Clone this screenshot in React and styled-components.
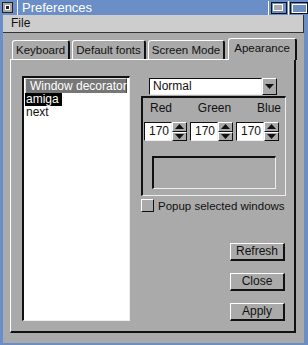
import React from 'react'
import styled, { createGlobalStyle } from 'styled-components'

const Global = createGlobalStyle`
  html, body { margin: 0; padding: 0; }
  body {
    font-family: "Liberation Sans", "DejaVu Sans", sans-serif;
    font-size: 11.5px;
    color: #111;
    white-space: nowrap;
  }
`

const Frame = styled.div`
  width: 308px;
  height: 345px;
  background: #6b8ec6;
  display: flex;
  flex-direction: column;
  box-sizing: border-box;
  padding: 0 4px 4px 3px;
  overflow: hidden;
`

const TitleBar = styled.div`
  height: 15px;
  display: flex;
  align-items: center;
  margin-left: -3px;
  margin-right: -4px;
  color: #fff;
  font-size: 13px;
`

const Gadget = styled.div`
  width: 11px;
  height: 11px;
  margin: 0 4px 0 2px;
  background: #aaa;
  border: 1px solid #222;
  box-sizing: border-box;
  display: flex;
  align-items: center;
  justify-content: center;
  &::after {
    content: '';
    width: 5px;
    height: 5px;
    background: #222;
    border: 1px solid #fff;
    box-sizing: border-box;
  }
`

const Title = styled.div`
  flex: 1;
  padding-left: 4px;
  border-left: 1px solid #fff;
  height: 15px;
  line-height: 15px;
`

const Depth = styled.div`
  width: 20px;
  height: 14px;
  box-sizing: border-box;
  border-left: 1px solid #fff;
  display: flex;
  align-items: center;
  justify-content: center;
  svg { display: block; }
`

const Body = styled.div`
  flex: 1;
  background: #aaa;
  display: flex;
  flex-direction: column;
`

const MenuBar = styled.div`
  height: 17px;
  background: #cdcdcd;
  border-bottom: 1px solid #333;
  border-right: 1px solid #333;
  padding-left: 8px;
  line-height: 17px;
  font-size: 12px;
`

const Content = styled.div`
  flex: 1;
  padding: 5px 8px 10px 7px;
  display: flex;
  flex-direction: column;
`

const Tabs = styled.div`
  display: flex;
  align-items: flex-end;
  height: 21px;
  padding-left: 2px;
`

const Tab = styled.div`
  height: ${p => (p.$active ? 21 : 18)}px;
  line-height: ${p => (p.$active ? 19 : 18)}px;
  padding: 0 ${p => (p.$active ? 5 : 3)}px;
  margin-right: ${p => (p.$active ? 0 : 2)}px;
  margin-left: ${p => (p.$active ? 1 : 0)}px;
  border-top: 1px solid #fff;
  border-left: 1px solid #fff;
  border-right: 2px solid #111;
  border-radius: 3px 3px 0 0;
  background: #aaa;
  position: relative;
  z-index: ${p => (p.$active ? 2 : 0)};
  margin-bottom: ${p => (p.$active ? -1 : 0)}px;
`

const Panel = styled.div`
  flex: 1;
  border-top: 1px solid #fff;
  border-left: 1px solid #fff;
  border-right: 2px solid #111;
  border-bottom: 2px solid #111;
  display: flex;
  padding: 16px 8px 10px 11px;
  gap: 11px;
`

const ListBox = styled.div`
  width: 108px;
  flex: none;
  background: #fff;
  border-top: 2px solid #111;
  border-left: 2px solid #111;
  border-right: 1px solid #eee;
  border-bottom: 1px solid #eee;
  display: flex;
  flex-direction: column;
  box-sizing: border-box;
  padding-left: 1px;
`

const ListHeader = styled.div`
  background: #777;
  color: #fff;
  height: 14px;
  line-height: 14px;
  padding-left: 4px;
  border-top: 1px solid #ddd;
  border-left: 1px solid #ddd;
  border-right: 1px solid #444;
  margin-right: 2px;
  font-size: 12px;
`

const ListItem = styled.div`
  height: 13px;
  line-height: 13px;
  padding-left: 1px;
  align-self: flex-start;
  padding-right: 3px;
  font-size: 12px;
  background: ${p => (p.$selected ? '#000' : 'transparent')};
  color: ${p => (p.$selected ? '#fff' : '#111')};
`

const Right = styled.div`
  width: 145px;
  flex: none;
  display: flex;
  flex-direction: column;
  padding-top: 2px;
`

const Select = styled.div`
  display: flex;
  height: 17px;
  margin-left: 8px;
  margin-right: 9px;
  margin-bottom: 1px;
`

const SelectField = styled.div`
  flex: 1;
  background: #fff;
  border-top: 1px solid #111;
  border-left: 1px solid #111;
  border-right: 1px solid #eee;
  border-bottom: 1px solid #eee;
  padding-left: 3px;
  line-height: 15px;
  font-size: 12px;
`

const ArrowButton = styled.div`
  width: 15px;
  box-sizing: border-box;
  border-top: 1px solid #fff;
  border-left: 1px solid #fff;
  border-right: 1px solid #111;
  border-bottom: 1px solid #111;
  display: flex;
  align-items: center;
  justify-content: center;
`

const Group = styled.div`
  border-top: 2px solid #111;
  border-left: 2px solid #111;
  border-right: 1px solid #eee;
  border-bottom: 1px solid #eee;
  height: 100px;
  box-sizing: border-box;
  display: flex;
  flex-direction: column;
  padding: 3px 0 0 1px;
`

const Labels = styled.div`
  display: flex;
  justify-content: space-between;
  padding: 0 4px 0 6px;
  height: 14px;
  line-height: 14px;
  font-size: 12px;
`

const Spinners = styled.div`
  display: flex;
  gap: 3px;
  margin-top: 7px;
`

const Spinner = styled.div`
  display: flex;
  height: 19px;
`

const NumField = styled.div`
  width: 28px;
  box-sizing: border-box;
  background: #fff;
  border-top: 1px solid #111;
  border-left: 1px solid #111;
  border-right: 1px solid #eee;
  border-bottom: 1px solid #eee;
  line-height: 17px;
  padding-left: 4px;
  font-size: 12px;
`

const SpinCol = styled.div`
  width: 15px;
  display: flex;
  flex-direction: column;
`

const SpinBtn = styled.div`
  flex: 1;
  box-sizing: border-box;
  border-top: 1px solid #fff;
  border-left: 1px solid #fff;
  border-right: 1px solid #111;
  border-bottom: 1px solid #111;
  display: flex;
  align-items: center;
  justify-content: center;
`

const Preview = styled.div`
  margin: 15px 0 0 8px;
  width: 124px;
  height: 33px;
  box-sizing: border-box;
  border-top: 2px solid #111;
  border-left: 2px solid #111;
  border-right: 1px solid #eee;
  border-bottom: 1px solid #eee;
  background: #aaa;
`

const CheckRow = styled.label`
  display: flex;
  align-items: center;
  gap: 4px;
  margin-top: 2px;
  height: 15px;
`

const Box = styled.span`
  width: 13px;
  height: 13px;
  flex: none;
  box-sizing: border-box;
  border-top: 1px solid #fff;
  border-left: 1px solid #fff;
  border-right: 1px solid #111;
  border-bottom: 1px solid #111;
`

const Buttons = styled.div`
  margin-top: 30px;
  display: flex;
  flex-direction: column;
  align-items: flex-end;
  gap: 12px;
`

const Button = styled.div`
  width: 55px;
  height: 18px;
  box-sizing: border-box;
  border-top: 1px solid #fff;
  border-left: 1px solid #fff;
  border-right: 2px solid #111;
  border-bottom: 2px solid #111;
  text-align: center;
  line-height: 15px;
  margin-right: 1px;
  font-size: 12px;
`

const Up = () => (
  <svg width="9" height="5" viewBox="0 0 9 5"><path d="M4.5 0L9 5H0z" fill="#111" /></svg>
)
const Down = () => (
  <svg width="9" height="5" viewBox="0 0 9 5"><path d="M0 0h9L4.5 5z" fill="#111" /></svg>
)

const Num = () => (
  <Spinner>
    <NumField>170</NumField>
    <SpinCol>
      <SpinBtn><Up /></SpinBtn>
      <SpinBtn><Down /></SpinBtn>
    </SpinCol>
  </Spinner>
)

export default function App () {
  return (
    <Frame>
      <Global />
      <TitleBar>
        <Gadget />
        <Title>Preferences</Title>
        <Depth>
          <svg width="16" height="12" viewBox="0 0 16 12">
            <rect x="0.5" y="0.5" width="15" height="11" fill="none" stroke="#111" />
            <rect x="2.5" y="2.5" width="9" height="6" fill="#aaa" stroke="#fff" />
          </svg>
        </Depth>
        <Depth>
          <svg width="18" height="12" viewBox="0 0 18 12">
            <rect x="0.5" y="0.5" width="17" height="11" fill="none" stroke="#111" />
            <rect x="2.5" y="2.5" width="14" height="8" fill="#6b8ec6" stroke="#fff" />
          </svg>
        </Depth>
      </TitleBar>
      <Body>
        <MenuBar>File</MenuBar>
        <Content>
          <Tabs>
            <Tab>Keyboard</Tab>
            <Tab>Default fonts</Tab>
            <Tab>Screen Mode</Tab>
            <Tab $active>Apearance</Tab>
          </Tabs>
          <Panel>
            <ListBox>
              <ListHeader>Window decorator</ListHeader>
              <ListItem $selected>amiga</ListItem>
              <ListItem>next</ListItem>
            </ListBox>
            <Right>
              <Select>
                <SelectField>Normal</SelectField>
                <ArrowButton><Down /></ArrowButton>
              </Select>
              <Group>
                <Labels>
                  <span>Red</span>
                  <span>Green</span>
                  <span>Blue</span>
                </Labels>
                <Spinners>
                  <Num />
                  <Num />
                  <Num />
                </Spinners>
                <Preview />
              </Group>
              <CheckRow>
                <Box />
                Popup selected windows
              </CheckRow>
              <Buttons>
                <Button>Refresh</Button>
                <Button>Close</Button>
                <Button>Apply</Button>
              </Buttons>
            </Right>
          </Panel>
        </Content>
      </Body>
    </Frame>
  )
}
